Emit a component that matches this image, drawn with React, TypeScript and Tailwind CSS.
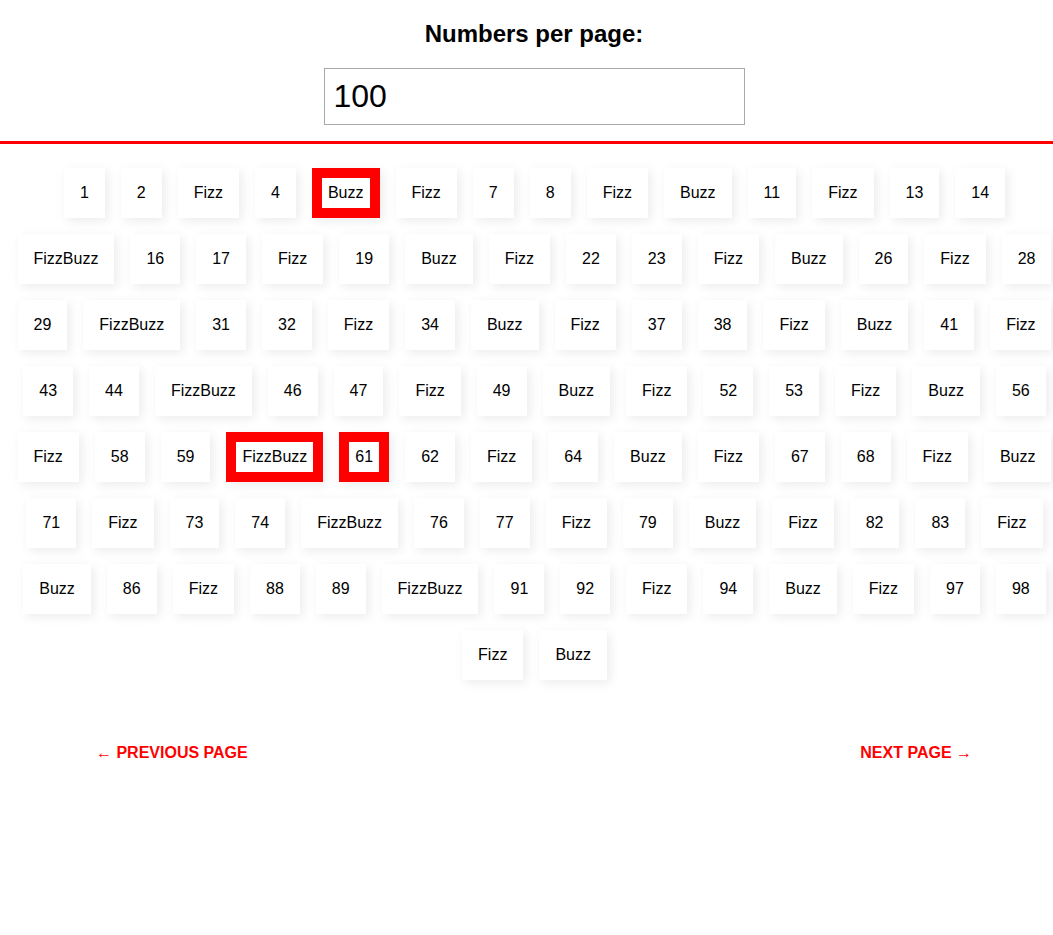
import { useState } from 'react';

const fizzBuzz = (n: number) => {
  if (n % 15 === 0) return 'FizzBuzz';
  if (n % 3 === 0) return 'Fizz';
  if (n % 5 === 0) return 'Buzz';
  return String(n);
};

const HIGHLIGHTED = [5, 60, 61];

export default function App() {
  const [perPage, setPerPage] = useState('100');
  const count = Math.max(0, Math.min(1000, parseInt(perPage, 10) || 0));
  const numbers = Array.from({ length: count }, (_, i) => i + 1);

  return (
    <div className="min-h-[935px] bg-white text-black font-['Liberation_Sans',Arial,sans-serif]">
      <div className="flex flex-col items-center pl-[15px] pt-[20px]">
        <h2 className="text-[24px] font-bold leading-[27.6px] mb-[20px]">Numbers per page:</h2>
        <input
          value={perPage}
          onChange={(e) => setPerPage(e.target.value)}
          className="w-[421px] h-[57px] border border-[#a9a9a9] px-[9px] text-[32px] leading-[37px] outline-none"
        />
      </div>
      <div className="mt-[16px] h-[3px] bg-[#ff0000]" />

      <div className="flex flex-wrap justify-center pt-[24px]">
        {numbers.map((n) => {
          const hot = HIGHLIGHTED.includes(n);
          return (
            <div
              key={n}
              className={
                hot
                  ? 'ml-4 mb-4 bg-white border-[10px] border-[#ff0000] p-[6px] text-[16px] leading-[18px] shadow-[3px_3px_10px_rgba(0,0,0,0.08)]'
                  : 'ml-4 mb-4 bg-white p-4 text-[16px] leading-[18px] shadow-[3px_3px_10px_rgba(0,0,0,0.08)]'
              }
            >
              {fizzBuzz(n)}
            </div>
          );
        })}
      </div>

      <div className="mt-[48px] flex justify-between pl-[96px] pr-[81px] text-[16px] font-bold text-[#ff0000] leading-[18px]">
        <a href="#">← PREVIOUS PAGE</a>
        <a href="#">NEXT PAGE →</a>
      </div>
    </div>
  );
}
